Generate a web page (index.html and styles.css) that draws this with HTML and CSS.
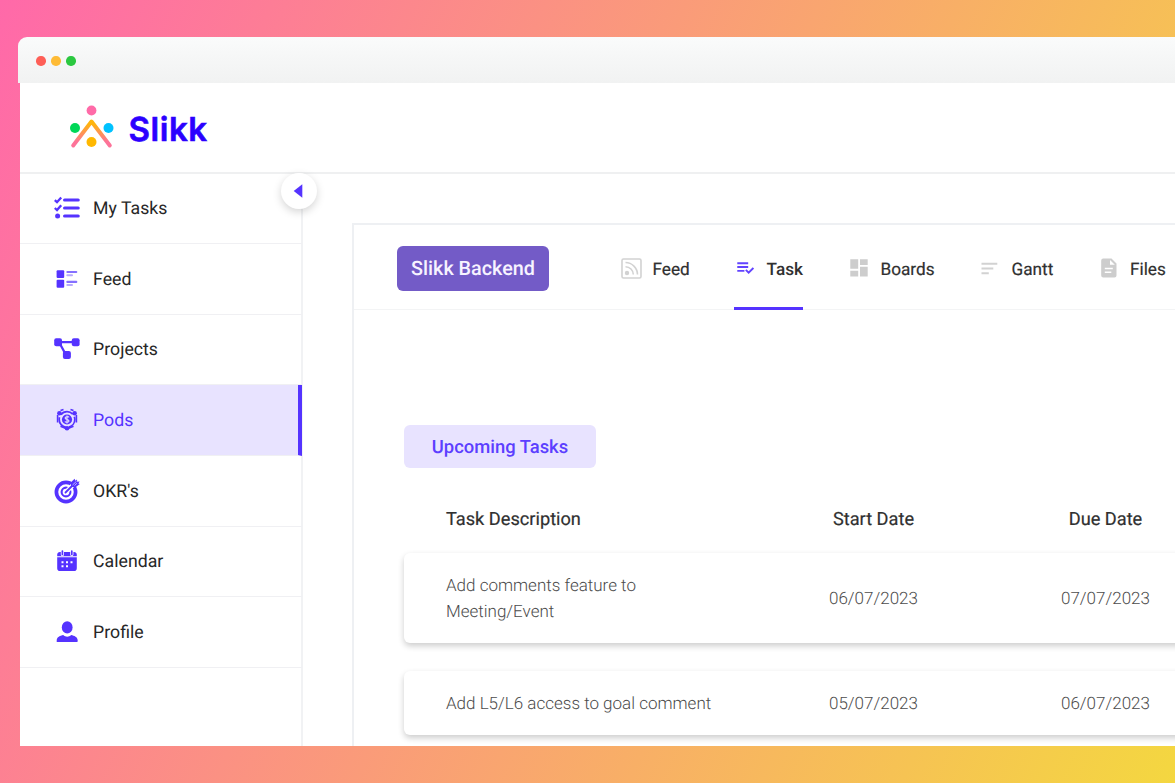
FILE: index.html
```html
<!DOCTYPE html>
<html lang="en">
<head>
<meta charset="utf-8">
<title>Slikk</title>
<link rel="stylesheet" href="styles.css">
</head>
<body>
<div class="window">
  <div class="titlebar"><i class="dot red"></i><i class="dot amber"></i><i class="dot green"></i></div>
  <div class="app">
    <header class="header">
      <svg class="logo" width="46" height="46" viewBox="0 0 46 46">
        <defs><linearGradient id="roof" x1="0" y1="0" x2="0" y2="1"><stop offset="0.1" stop-color="#ffb50c"/><stop offset="0.85" stop-color="#fd7399"/></linearGradient></defs>
        <path d="M4.2 41.5 22.5 17.5 40.8 41.5" fill="none" stroke="url(#roof)" stroke-width="4" stroke-linecap="round" stroke-linejoin="round"/>
        <circle cx="22.5" cy="6.5" r="4.9" fill="#ff6ba8"/>
        <circle cx="6" cy="24" r="5" fill="#00d757"/>
        <circle cx="39.5" cy="24" r="5" fill="#00c2ff"/>
        <circle cx="22.5" cy="38" r="5" fill="#ffb800"/>
      </svg>
      <span class="brand">Slikk</span>
    </header>
    <div class="body">
      <aside class="sidebar">
        <button class="collapse" aria-label="Collapse"><svg width="10" height="16" viewBox="0 0 10 16"><path d="M9.3 1.2v13.6L.7 8z" fill="#5533ff"/></svg></button>
        <nav class="menu">
          <a class="item"><svg class="ico" viewBox="0 0 26 26"><g fill="none" stroke="#5533ff" stroke-width="2.7"><path d="M10.6 5h13.600M10.600 13h13.600M10.600 21h13.600" stroke-width="3.200" stroke-linecap="round"/><path d="M.8 5.200 3 7.200 7.200 2.400M.8 13 3 15 7.200 10.200" stroke-width="2.300"/></g><circle cx="3.600" cy="21" r="2.500" fill="#5533ff"/></svg><span>My Tasks</span></a>
          <a class="item"><svg class="ico" viewBox="0 0 26 26"><g fill="#5533ff"><rect x="2.600" y="4.200" width="7.600" height="7.900" rx="1"/><rect x="2.600" y="13.800" width="7.600" height="7.900" rx="1"/></g><g fill="#8570ff"><rect x="12.300" y="5" width="11" height="2.100" rx="1"/><rect x="12.300" y="14.800" width="11" height="2.100" rx="1"/></g><g fill="#b8abff"><rect x="12.300" y="8.200" width="6.700" height="2" rx="1"/><rect x="12.300" y="18.100" width="6.700" height="2" rx="1"/></g></svg><span>Feed</span></a>
          <a class="item"><svg class="ico" viewBox="0 0 26 26"><path d="M5 6.200h15M5 6l7 13" stroke="#5533ff" stroke-width="2.300"/><g fill="#5533ff"><rect x=".2" y="2.200" width="7.800" height="8" rx="2"/><rect x="17.800" y="2.200" width="7.800" height="8" rx="2"/><rect x="8.900" y="15" width="8" height="8" rx="2"/></g></svg><span>Projects</span></a>
          <a class="item active"><svg class="ico" viewBox="0 0 26 26"><g fill="none" stroke="#5533ff"><circle cx="13" cy="12.500" r="7.800" stroke-width="1.700" stroke-dasharray="13.300 3" stroke-dashoffset="3"/><path d="M3.600 15.500V8M22.400 15.500V8M6.500 3.600 9.500 2.500M19.500 3.600l-3-1.100M6.500 19.300 13 22l6.500-2.700" stroke-width="1.600"/></g><g fill="#5533ff"><circle cx="5.400" cy="6.200" r="2.300"/><circle cx="20.600" cy="6.200" r="2.300"/><circle cx="13" cy="21.300" r="2.300"/><circle cx="13" cy="12.500" r="5.100"/></g><path d="M15 10.400c-.4-1-3.900-1.100-3.900.6 0 1.900 3.900 1 3.900 3 0 1.700-3.600 1.600-4.100.5M13 8.500v8" fill="none" stroke="#e8e3ff" stroke-width="1.100"/></svg><span>Pods</span></a>
          <a class="item"><svg class="ico" viewBox="0 0 26 26"><g fill="none" stroke="#5533ff"><circle cx="12" cy="14" r="9.600" stroke-width="3.700"/><circle cx="12" cy="14" r="4.400" stroke-width="2.100"/></g><path d="M13.500 12.500 21 5" stroke="#fff" stroke-width="4.500"/><path d="M11.500 14.500 21 5" stroke="#5533ff" stroke-width="1.800" stroke-linecap="round"/><path d="M17 8.800V4.200L20.600.8l.7 2 1.700-1.300.2 2.300 2.400-.2-1.200 1.800 1.500.6-4.300 3.200z" fill="#5533ff"/><path d="m18.500 7 4-3.700M20.500 7.500l2.500-2.300" stroke="#fff" stroke-width=".6"/></svg><span>OKR's</span></a>
          <a class="item"><svg class="ico" viewBox="0 0 26 26"><path d="M6 4h14a2.800 2.800 0 0 1 2.800 2.600v1.700H3.200V6.600A2.800 2.800 0 0 1 6 4ZM3.200 9.300h19.600v10.900a2.800 2.800 0 0 1-2.800 2.800H6a2.800 2.800 0 0 1-2.800-2.800z" fill="#5533ff"/><path d="M8.400 3v3.600M17.800 3v3.600" stroke="#fff" stroke-width="3.200" stroke-linecap="round"/><path d="M8.400 3v3.500M17.800 3v3.500" stroke="#5533ff" stroke-width="1.700" stroke-linecap="round"/><path d="M7.500 14.300h2M12 14.300h2M16.500 14.300h2M7.500 18.300h2M12 18.300h2" stroke="#fff" stroke-width="1.900"/></svg><span>Calendar</span></a>
          <a class="item"><svg class="ico" viewBox="0 0 26 26"><ellipse cx="13.200" cy="8.400" rx="5.400" ry="6.200" fill="#5533ff"/><path d="M2.700 22.900v-1.500c0-3.600 3.600-4.600 6.500-5.400 2.300 2.200 5.700 2.200 8 0 2.900.8 6.500 1.800 6.500 5.400v.8c0 .5-.3.700-.7.700z" fill="#5533ff"/></svg><span>Profile</span></a>
        </nav>
      </aside>
      <main class="content">
        <section class="panel">
          <div class="tabs">
            <div class="project">Slikk Backend</div>
            <a class="tab feed"><svg width="21" height="21" viewBox="0 0 21 21" fill="none" stroke="#d2d2d2" stroke-width="1.600"><rect x="1" y="1" width="19" height="19" rx="1.500"/><path d="M4.500 4.500c6.500 0 12 5.500 12 12M4.500 8.700c4.300 0 7.800 3.500 7.800 7.800"/><circle cx="6" cy="15" r="1.400" fill="#d2d2d2"/></svg><span>Feed</span></a>
            <a class="tab task"><svg width="18" height="14" viewBox="0 0 18 14" fill="none" stroke="#6243ff" stroke-width="2"><path d="M.3 2h11.500M.3 6h11.500M.3 10h7.500M9.300 9l3 3L17.300 7"/></svg><span>Task</span></a>
            <a class="tab boards"><svg width="18" height="18" viewBox="0 0 18 18" fill="#cdcdcd"><path d="M.3.300h7.900v9.500H.3zM10 .300h7.700v5.800H10zM.3 11.800h7.900v5.800H.3zM10 7.800h7.700v9.800H10z"/></svg><span>Boards</span></a>
            <a class="tab gantt"><svg width="17" height="13" viewBox="0 0 17 13" stroke="#d2d2d2" stroke-width="2"><path d="M.5 1.700h15.800M.5 6.500h11.800M.5 11.300h7.300"/></svg><span>Gantt</span></a>
            <a class="tab files"><svg width="16" height="20" viewBox="0 0 16 20"><path d="M2.200.5h8.300l5 5v12a2 2 0 0 1-2 2H2.200a2 2 0 0 1-2-2v-15a2 2 0 0 1 2-2Z" fill="#cdcdcd"/><path d="M9 2v4.800h4.800z" fill="#fff"/><path d="M3.800 10.500h8M3.800 14.300h6.500" stroke="#fff" stroke-width="1.400"/></svg><span>Files</span></a>
          </div>
          <div class="tasks">
            <h2 class="badge">Upcoming Tasks</h2>
            <div class="row head"><span>Task Description</span><span>Start Date</span><span>Due Date</span></div>
            <div class="row card tall"><span class="desc">Add comments feature to<br>Meeting/Event</span><span>06/07/2023</span><span>07/07/2023</span></div>
            <div class="row card"><span class="desc">Add L5/L6 access to goal comment</span><span>05/07/2023</span><span>06/07/2023</span></div>
          </div>
        </section>
      </main>
    </div>
  </div>
</div>
</body>
</html>
```
FILE: styles.css
```css
* { box-sizing: border-box; }
html, body { height: 100%; }
body {
  margin: 0;
  padding: 37.400px 0 0 18.400px;
  overflow: hidden;
  font-family: Roboto, sans-serif;
  text-rendering: geometricPrecision;
  background: linear-gradient(113deg, #ff69a9, #f4d740);
}
.titlebar {
  height: 46px;
  display: flex;
  align-items: center;
  gap: 5.600px;
  padding: 1px 0 0 18px;
  border-radius: 9px 0 0 0;
  background: linear-gradient(#fafbfb, #f1f2f2);
}
.dot { width: 9.400px; height: 9.400px; border-radius: 50%; }
.red { background: #fe5f57; }
.amber { background: #febb36; }
.green { background: #2bc840; }
.app {
  height: 663px;
  margin-left: 1.600px;
  display: flex;
  flex-direction: column;
  overflow: hidden;
  background: #fff;
}
.header {
  flex: none;
  height: 90.600px;
  display: flex;
  align-items: center;
  padding: 0 0 0 49px;
  border-bottom: 2px solid #eff0f1;
}
.logo { margin-bottom: 2px; }
.brand {
  margin: 2px 0 0 13.400px;
  font: 600 33px Inter, sans-serif;
  letter-spacing: .6px;
  color: #2b00ff;
  -webkit-text-stroke: .6px #2b00ff;
}
.body { flex: 1; display: flex; min-height: 0; }
.sidebar {
  position: relative;
  flex: none;
  width: 283px;
  border-right: 2px solid #f1f2f4;
}
.collapse {
  position: absolute;
  z-index: 1;
  top: -.9px;
  right: -16px;
  width: 36px;
  height: 36px;
  padding: 0 1px 0 0;
  display: flex;
  align-items: center;
  justify-content: center;
  border: 0;
  border-radius: 50%;
  background: #fff;
  box-shadow: 0 3px 8px rgba(0, 0, 0, .17);
}
.menu { margin: -.8px -1px 0 0; }
.item {
  height: 70.700px;
  display: flex;
  align-items: center;
  padding-left: 33.600px;
  border-bottom: 1.500px solid #f0f0f3;
  font-size: 17.700px;
  color: #272727;
}
.item span { padding-top: 2px; }
.ico { width: 26px; height: 26px; margin-right: 13.500px; }
.active {
  background: #e8e3ff;
  color: #5533ff;
  border-right: 4px solid #5533ff;
}
.content { flex: 1; min-width: 0; padding: 49.500px 0 0 49px; }
.panel { height: 530px; border: solid #eef0f3; border-width: 2px 0 0 2px; }
.tabs {
  height: 84.500px;
  display: flex;
  align-items: center;
  padding-left: 43px;
  border-bottom: 1.500px solid #f3f4f5;
}
.project {
  width: 152px;
  height: 45px;
  margin-top: 2px;
  line-height: 46px;
  flex: none;
  border-radius: 6px;
  text-align: center;
  font-size: 19.800px;
  font-weight: 500;
  color: #f7f3ff;
  background: #735bc7;
}
.tab {
  flex: none;
  height: 100%;
  padding-top: 1.600px;
  display: flex;
  align-items: center;
  font-size: 17.200px;
  color: #303030;
  -webkit-text-stroke: .2px #303030;
}
.tab span { padding-top: 4px; }
.feed { margin-left: 72px; width: 113.500px; gap: 10.500px; }
.task {
  position: relative;
  width: 68.500px;
  padding-left: 2.500px;
  gap: 12.500px;
  font-weight: 500;
  -webkit-text-stroke: 0;
}
.task::after {
  content: "";
  position: absolute;
  left: 0;
  right: 0;
  bottom: -1px;
  height: 3px;
  background: #5533ff;
}
.boards { margin-left: 47px; width: 131.500px; gap: 12.500px; }
.gantt { width: 119.500px; gap: 13px; }
.files { gap: 13px; }
.tasks { padding: 115.400px 0 0 50px; }
.badge {
  width: 192px;
  height: 43px;
  line-height: 45px;
  margin: 0;
  border-radius: 6px;
  text-align: center;
  font-size: 18.400px;
  font-weight: 500;
  color: #5c3fff;
  background: #e8e3ff;
}
.row {
  width: 850px;
  display: grid;
  grid-template-columns: 311.500px 232px 232px;
  align-items: center;
  padding: 1px 0 0 42px;
  font-size: 17px;
}
.row span:not(:first-child) { text-align: center; }
.head { height: 85px; padding-top: 16.500px; font-size: 18.200px; color: #303030; -webkit-text-stroke: .2px #303030; }
.card {
  height: 64px;
  border-radius: 6px;
  color: #4c4c4c;
  font-weight: 300;
  background: #fff;
  box-shadow: 0 3px 6px rgba(0, 0, 0, .2);
}
.tall { height: 90px; margin-bottom: 28px; }
.desc { line-height: 26px; }
```
